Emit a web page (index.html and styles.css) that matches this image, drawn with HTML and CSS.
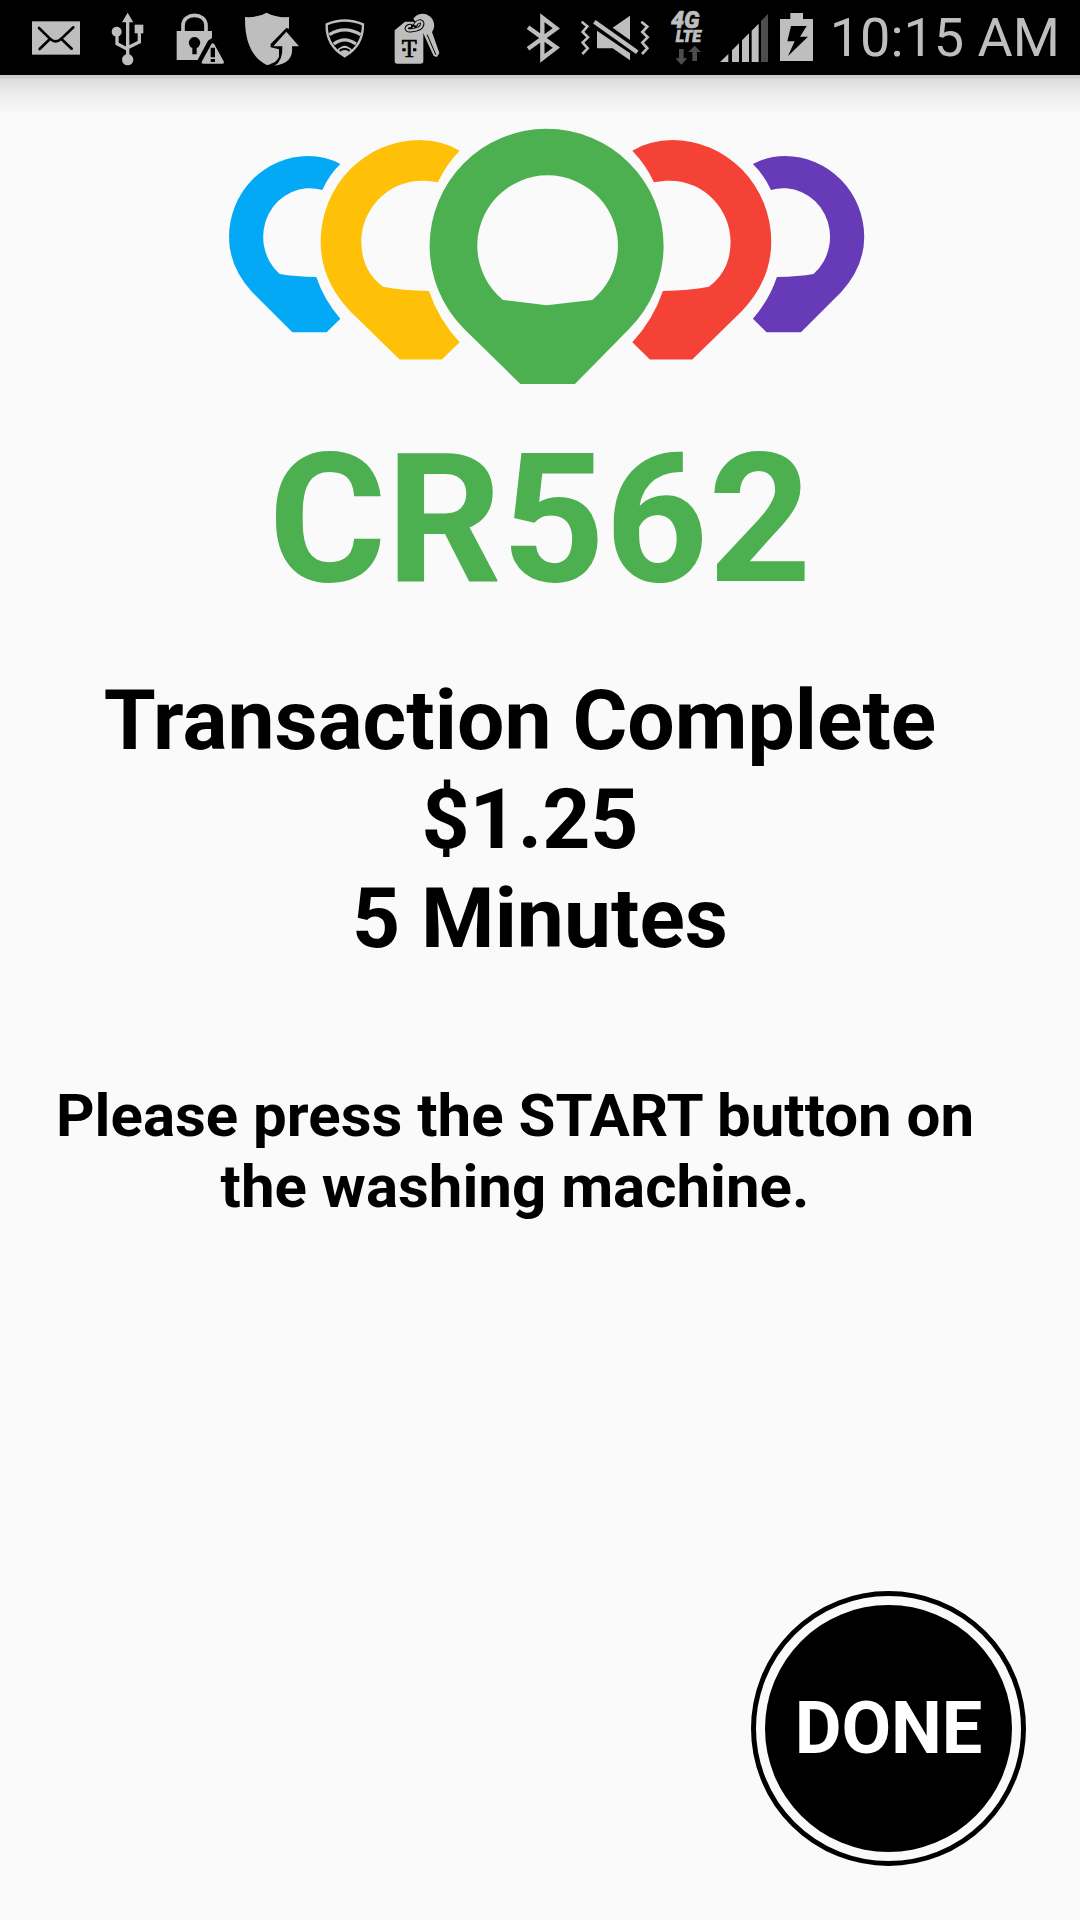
FILE: index.html
```
<!DOCTYPE html>
<html lang="en">
<head>
    <meta charset="UTF-8">
    <meta name="viewport" content="width=device-width, initial-scale=1.0">
    <title>Transaction Complete</title>
    <link rel="stylesheet" href="styles.css">
</head>
<body>
    <!-- Status bar -->
    <header class="status-bar">
        <div class="status-group">
            <!-- Mail -->
            <svg class="status-icon" viewBox="60 0 216 225" aria-hidden="true">
                <rect x="96" y="64" width="144" height="100"/>
                <path class="cut" d="M117 84L149 115Q167 133 185 115L220 82M149 118L119 147M185 118L215 146" stroke-width="8"/>
            </svg>
            <!-- USB -->
            <svg class="status-icon" viewBox="276 0 216 225" aria-hidden="true">
                <path d="M383 38L400 67H366Z"/>
                <circle cx="350" cy="95" r="15"/>
                <rect x="404" y="74" width="26" height="26"/>
                <circle cx="383" cy="179" r="17"/>
                <path class="line" d="M383 60V170M351 100V131L383 148M418 95V126L383 143" stroke-width="10"/>
            </svg>
            <!-- Lock with warning -->
            <svg class="status-icon" viewBox="492 0 216 225" aria-hidden="true">
                <path class="line" d="M549 96V76C549 36 618 36 618 76V96" stroke-width="11"/>
                <path d="M530 93H636V114L624 122L593 180H530Z"/>
                <path class="hole" d="M577 163V144A17 17 0 1 1 590 144V163Z"/>
                <path d="M634 133Q638 126 643 133L671 184Q674 191 667 191H610Q602 191 606 184Z"/>
                <path class="hole" d="M632 143H645V172H632ZM632 177H645V186H632Z"/>
            </svg>
            <!-- Shield with arrow -->
            <svg class="status-icon" viewBox="18 0 216 225" aria-hidden="true">
                <path d="M110 38Q140 54 177 51V86L169 84L122 132V142L147 148V170Q140 186 126 190Q118 196 110 195Q43 162 45 51Q82 54 110 38Z"/>
                <path d="M169 95L207 139H186Q192 190 134 197Q159 183 157 139H130Z"/>
            </svg>
            <!-- Wi-Fi shield -->
            <svg class="status-icon" viewBox="234 0 216 225" aria-hidden="true">
                <path class="line" d="M290 73Q344 50 399 73Q400 137 344 169Q288 137 290 73Z" stroke-width="7"/>
                <path class="line" d="M298 104Q344 75 392 104M311 132Q344 107 378 132" stroke-width="10"/>
                <path d="M321 151Q344 124 367 151Q356 165 344 170Q331 165 321 151Z"/>
                <path class="cut" d="M331 151Q344 143 357 151" stroke-width="6"/>
            </svg>
            <!-- Tag with keys -->
            <svg class="status-icon" viewBox="450 0 216 225" aria-hidden="true">
                <path d="M550 56A33 33 0 1 1 606 96L628 159L621 171L611 168L579 98Z"/>
                <path class="cut" d="M592 105L617 163" stroke-width="3"/>
                <path d="M525 65H550L580 92V183Q580 191 571 191H502Q494 191 494 183V91Z"/>
                <path class="cut" d="M543 78C526 77 526 93 542 91C560 90 576 84 577 71C576 60 561 63 555 76" stroke-width="13"/>
                <path class="line" d="M543 78C526 77 526 93 542 91C560 90 576 84 577 71C576 60 561 63 555 76" stroke-width="7"/>
                <text class="carrier" x="538" y="171">T</text>
                <path class="hole" d="M517 145H527V154H517ZM549 145H559V154H549Z"/>
            </svg>
        </div>

        <div class="status-group">
            <!-- Bluetooth -->
            <svg class="status-icon" viewBox="12 0 216 225" aria-hidden="true">
                <path class="line" d="M84 82L169 143L127 175V53L169 85L84 146" stroke-width="13"/>
            </svg>
            <!-- Muted, vibrate -->
            <svg class="status-icon" viewBox="228 0 216 225" aria-hidden="true">
                <path d="M390 47V120L338 83Z"/>
                <path d="M291 92L390 160V181L338 145H291Z"/>
                <path class="line" d="M283 65L412 157" stroke-width="13"/>
                <path class="line" d="M245 65L262 79L248 96L264 112L248 128L263 145L247 162M424 65L442 80L427 96L443 112L427 128L442 145L426 162" stroke-width="8"/>
            </svg>
            <!-- 4G LTE -->
            <svg class="status-icon" viewBox="444 0 216 225" role="img" aria-label="4G LTE">
                <text class="network" x="513" y="85" font-size="70">4G</text>
                <text class="network" x="527" y="126" font-size="48">LTE</text>
                <path class="dim" d="M537 147H551V175H562L544 194L526 175H537ZM577 183V156H565L584 137L603 156H591V183Z"/>
            </svg>
            <!-- Signal -->
            <svg class="status-icon signal" viewBox="90 0 156 225" aria-hidden="true">
                <path d="M90 186L115 162V186ZM126 186V151L147 130V186ZM156 186V121L177 100V186ZM185 186V92L206 71V186Z"/>
                <path class="dim" d="M213 186V63L234 42V186Z"/>
            </svg>
            <!-- Battery -->
            <svg class="status-icon battery" viewBox="246 0 144 225" aria-hidden="true">
                <path d="M301 39H339V57H369V183H270V57H301Z"/>
                <path class="hole" d="M303 78H350L330 110H354L294 168L314 124H292Z"/>
            </svg>
            <time class="clock" datetime="10:15">10:15 AM</time>
        </div>
    </header>

    <!-- Receipt -->
    <main class="content">
        <svg class="logo" viewBox="-17 54 1954 771" role="img" aria-label="Logo">
            <defs>
                <path id="outer-pin" d="M218 667L97 546Q28 470 28 381A238 243 0 0 1 266 138Q318 138 362 162Q329 194 308 240A140 146 0 0 0 180 492Q225 500 290 501Q313 570 362 626L321 667Z"/>
                <path id="middle-pin" d="M540 749L390 602Q303 510 303 395A297 305 0 0 1 600 90Q666 90 720 122Q679 164 655 217C522 188 425 288 425 395Q425 482 490 530Q550 541 628 543Q657 629 720 697L667 749Z"/>
            </defs>
            <use class="pin-blue" href="#outer-pin"/>
            <use class="pin-yellow" href="#middle-pin"/>
            <use class="pin-red" href="#middle-pin" transform="translate(1958 0) scale(-1 1)"/>
            <use class="pin-purple" href="#outer-pin" transform="translate(1962 0) scale(-1 1)"/>
            <path class="pin-green" fill-rule="evenodd" d="M902 822L733 656A351 351 0 1 1 1229 656L1066 822ZM850 570A211 211 0 1 1 1118 570L981 586Z"/>
        </svg>

        <h1 class="machine">CR562</h1>

        <div class="summary">
            <p class="status">Transaction Complete</p>
            <p class="price">$1.25</p>
            <p>5 Minutes</p>
        </div>

        <p class="message">Please press the START button on the washing machine.</p>

        <button class="done" type="button">DONE</button>
    </main>
</body>
</html>
```
FILE: styles.css
```
/* General styles */
* {
    margin: 0;
    padding: 0;
    box-sizing: border-box;
}

body {
    display: flex;
    flex-direction: column;
    min-height: 100vh;
    background-color: #fafafa;
    color: #000;
    font-family: Roboto, sans-serif;
}

/* Status bar */
.status-bar {
    display: flex;
    justify-content: space-between;
    height: 75px;
    padding: 0 20px;
    background-color: #000;
    color: #bebebe;
}

.status-group {
    display: flex;
    align-items: center;
}

.status-icon {
    width: 72px;
    height: 75px;
    fill: #bebebe;
    overflow: visible;
}

.signal {
    width: 52px;
}

.battery {
    width: 48px;
}

.status-icon .line {
    fill: none;
    stroke: #bebebe;
}

.status-icon .cut {
    fill: none;
    stroke: #000;
    stroke-linecap: round;
}

.status-icon .hole {
    fill: #000;
}

.status-icon .dim {
    fill: #4d4d4d;
}

.network {
    stroke: #bebebe;
    stroke-width: 2px;
    font-weight: 900;
    font-style: italic;
}

.carrier {
    fill: #000;
    stroke: #000;
    stroke-width: 2px;
    font-family: "Liberation Serif", serif;
    font-size: 74px;
    text-anchor: middle;
}

.clock {
    padding-left: 10px;
    font-size: 54px;
    line-height: 77px;
    white-space: nowrap;
}

/* Content */
.content {
    display: flex;
    flex: 1;
    flex-direction: column;
    align-items: center;
    padding: 53px 54px 54px;
    background: linear-gradient(#ccc 0, #ccc 3px, #dcdcdc 4px, #ececec 18px, #fafafa 40px);
    font-weight: bold;
    text-align: center;
}

/* Logo */
.logo {
    width: 67%;
}

.pin-blue {
    fill: #03a9f4;
}

.pin-yellow {
    fill: #ffc107;
}

.pin-green {
    fill: #4caf50;
}

.pin-red {
    fill: #f44336;
}

.pin-purple {
    fill: #673ab7;
}

.machine {
    margin-top: 29px;
    color: #4caf50;
    font-size: 180px;
    line-height: 211px;
}

.summary {
    margin-top: 46px;
    font-size: 84px;
    line-height: 99px;
}

.status {
    padding-right: 40px;
}

.price {
    padding-right: 20px;
}

.message {
    margin: 112px 50px 60px 0;
    font-size: 60px;
    line-height: 71px;
}

/* Done button */
.done {
    align-self: flex-end;
    width: 275px;
    height: 275px;
    margin-top: auto;
    padding: 9px;
    border: 5px solid #000;
    border-radius: 50%;
    background: #000 content-box;
    color: #fff;
    font-family: inherit;
    font-size: 72px;
    font-weight: bold;
    cursor: pointer;
}
```
